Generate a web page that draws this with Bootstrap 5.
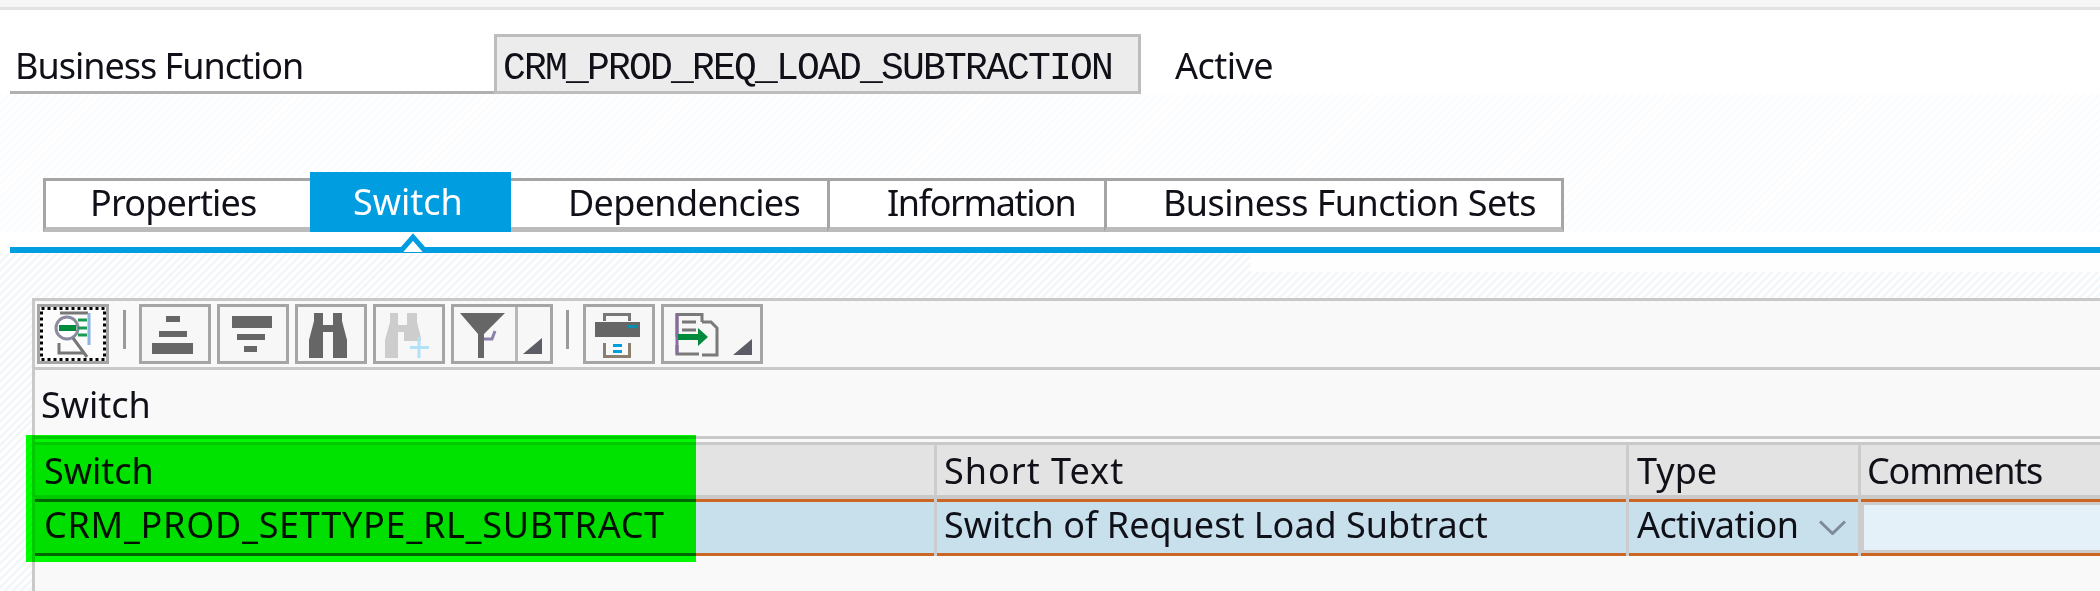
<!DOCTYPE html>
<html lang="en"><head><meta charset="utf-8"><title>Business Function</title>
<link href="https://cdn.jsdelivr.net/npm/bootstrap@5.3.0/dist/css/bootstrap.min.css" rel="stylesheet">
<style>
html,body{margin:0;height:591px;overflow:hidden}
body{width:2100px;background:#fff;color:#101018;font-family:"Noto Sans","Open Sans",sans-serif;font-size:36px;line-height:40px;position:relative}
.topstrip{height:10px;background:#f6f6f6;border-bottom:3px solid #e2e2e2}
.bfrow{padding:24px 0 0 10px;height:84px}
.bflabel{width:484px;height:60px;border-bottom:3px solid #b0b0b0;padding:12px 0 0 5px;letter-spacing:-1px}
.bffield{width:647px;height:60px;background:#ececec;border:3px solid #bdbdbd;font-family:"Liberation Mono",monospace;font-size:38px;letter-spacing:-1.8px;padding:12px 0 0 6px;white-space:nowrap}
.bfstate{padding:12px 0 0 34px;letter-spacing:-.5px}
.tabzone{padding:78px 0 0 43px;background:repeating-linear-gradient(135deg,#fbfcfd 0 2.8px,#fff 2.8px 5.6px)}
.tabsbar{height:60px;width:1521px}
.tabx{height:54px;border-top:3px solid #a5a5a5;border-bottom:5px solid #bbb;background:#fff;white-space:nowrap;padding-top:2px}
.tabp{width:267px;border-left:3px solid #a5a5a5;padding-left:44px;letter-spacing:-.85px}
.tabs{width:201px;height:60px;background:#009de0;color:#fff;border:0;padding:10px 0 0 43px}
.tabd{width:316px;padding-left:57px;letter-spacing:-.67px}
.tabi{width:277px;border-left:3px solid #a5a5a5;padding-left:57px;letter-spacing:-1.4px}
.tabb{width:460px;border-left:3px solid #a5a5a5;border-right:3px solid #a5a5a5;padding-left:56px;letter-spacing:-.55px}
.tabline{height:21px;background:linear-gradient(#fff 15px,#009de0 15px);padding:0;margin-left:10px}
.tablineleft{background:#fff}
.notch{left:398px;top:233px}
.hatch{height:338px;padding:45px 0 0 32px;background:linear-gradient(#fefefe,#fefefe) 1250px 0/850px 19px no-repeat,repeating-linear-gradient(135deg,#f3f7fa 0 2.8px,#fff 2.8px 5.6px)}
.panel{height:293px;background:#f9f9f9;border-left:3px solid #c9c9c9;border-top:3px solid #c9c9c9}
.toolrow{height:69px;padding:3px 0 0 2px;border-bottom:3px solid #c9c9c9;align-items:flex-start}
.tbtn{width:72px;height:60px;border:3px solid #a5a5a5;background:#f7f7f7;margin-right:6px;flex:none}
.tbtn svg{display:block;flex:none}
.tbwide{width:102px}
.tsep{width:3px;height:39px;background:#9b9b9b;margin:6px 13px 0 8px;flex:none}
.tsep2{margin:6px 14px 0 7px}
.paneltitle{height:69px;padding:15px 0 0 6px;border-bottom:3px solid #c9c9c9}
.gridgap{height:3px}
.ghead{height:57px;background:#e3e3e3;border-top:3px solid #c9c9c9;border-bottom:4px solid #c9c9c9}
.grow1{height:57px}
.gcell{border-right:3px solid #ccc;white-space:nowrap;flex:none}
.c1{width:902px;padding-left:9px}.c2{width:692px;padding-left:7px}.c3{width:232px;padding-left:8px}.c4{flex:1 1 auto;border-right:0;padding-left:6px}
.ghead .gcell{padding-top:6px;height:50px}
.grow1 .gcell{padding-top:6px;height:57px;position:relative;background:linear-gradient(#cc6625,#cc6625) top/100% 3px no-repeat,linear-gradient(#cc6625,#cc6625) bottom/100% 3px no-repeat,#c8dfec}
.grow1 .c4{padding:6px 0 6px 3px;background:linear-gradient(#cc6625,#cc6625) top/100% 3px no-repeat,linear-gradient(#cc6625,#cc6625) bottom/100% 3px no-repeat,#ccc}
.chev{right:12px;top:21px}
.cinput{height:45px;background:#e5f1f8}
.overlay{left:26px;top:435px;width:670px;height:127px;background:#00ff00;mix-blend-mode:multiply}
.lsp1{letter-spacing:1px}.lsm12{letter-spacing:-1.2px}.lsp7{letter-spacing:.7px}.lsm6{letter-spacing:-.6px}
</style></head>
<body>
<div class="topstrip"></div>
<div class="bfrow d-flex align-items-start">
  <div class="bflabel">Business Function</div>
  <div class="bffield">CRM_PROD_REQ_LOAD_SUBTRACTION</div>
  <div class="bfstate">Active</div>
</div>
<div class="tabzone">
<div class="tabsbar d-flex align-items-end">
  <div class="tabx tabp">Properties</div>
  <div class="tabx tabs">Switch</div>
  <div class="tabx tabd">Dependencies</div>
  <div class="tabx tabi">Information</div>
  <div class="tabx tabb">Business Function Sets</div>
</div>
</div>
<div class="tablineleft"><div class="tabline"></div></div>
<svg class="notch position-absolute" width="30" height="20" viewBox="0 0 30 20"><path d="M2 19 15 4 28 19Z" fill="#fff"/><path d="M2 19 15 4 28 19" fill="none" stroke="#009de0" stroke-width="5"/></svg>
<div class="hatch">
  <div class="panel">
    <div class="toolrow d-flex">
      <div class="tbtn"><svg width="66" height="54" viewBox="0 0 66 54"><rect x="1.5" y="1.5" width="63" height="51" fill="#fcfcfc" stroke="#000" stroke-width="3" stroke-dasharray="3 3"/><circle cx="27" cy="21" r="11" fill="#fff" stroke="#8a8aa0" stroke-width="3"/><path d="M20 6h28" stroke="#777" stroke-width="3"/><rect x="19" y="18" width="17" height="6" fill="#008a3c"/><path d="M38 13h9M38 21h9M38 28h9" stroke="#1a9a50" stroke-width="3"/><path d="M49 6v32" stroke="#8ab4e0" stroke-width="3"/><path d="M19 36v10h26M33 31l14 19" fill="none" stroke="#777" stroke-width="3"/></svg></div>
      <div class="tsep"></div>
      <div class="tbtn"><svg width="66" height="54" viewBox="0 0 66 54"><path d="M24 9h14v6H24zM17 24h28v6H17zM10 36h41v11H10z" fill="#666"/></svg></div>
      <div class="tbtn"><svg width="66" height="54" viewBox="0 0 66 54"><path d="M12 9h40v12H12zM17 27h28v6H17zM24 39h13v6H24z" fill="#666"/></svg></div>
      <div class="tbtn"><svg width="66" height="54" viewBox="0 0 66 54"><path d="M16 6h9v12h10V6h9v8l5 19v18H35V25H25v26H11V33l5-19z" fill="#666"/></svg></div>
      <div class="tbtn"><svg width="66" height="54" viewBox="0 0 66 54"><path d="M14 6h8v12h9V6h10v9l4 16v3H28V25h-6v26H9V33l5-18z" fill="#cdcdcd"/><path d="M43 30v21M34 40.500h19" stroke="#b3e2f8" stroke-width="3"/></svg></div>
      <div class="tbtn tbwide d-flex"><svg width="61" height="54" viewBox="0 0 61 54"><path d="M6 6h45L30 27v24h-6V27z" fill="#666"/><path d="M30 32h8l3-8" fill="none" stroke="#8a80a8" stroke-width="3"/></svg><svg width="35" height="54" viewBox="0 0 35 54"><path d="M1.500 0v54" stroke="#b8b8b8" stroke-width="3"/><path d="M8 47 27 31v16z" fill="#5c5c66"/></svg></div>
      <div class="tsep tsep2"></div>
      <div class="tbtn"><svg width="66" height="54" viewBox="0 0 66 54"><path d="M18.500 14V7.500h25V14" fill="none" stroke="#777" stroke-width="3"/><path d="M9 15h45v15H9z" fill="#666"/><rect x="42" y="18" width="9" height="3" fill="#0a8fb0"/><path d="M18.500 36v13.500h25V36" fill="#fafafa" stroke="#8d7f70" stroke-width="3"/><path d="M27 38.500h9M27 44.500h9" stroke="#00a0e0" stroke-width="3"/></svg></div>
      <div class="tbtn tbwide"><svg width="96" height="54" viewBox="0 0 96 54"><path d="M38 48h15V21l-6-6H38M13 30V7.500h25V15M13 38v9h22" fill="none" stroke="#7a7a7a" stroke-width="3"/><path d="M13 7v40" stroke="#8c6aa0" stroke-width="3"/><path d="M18 15h14M18 23h14" stroke="#777" stroke-width="3"/><path d="M14 27h20v-6l10 9-10 9v-6H14z" fill="#008a3c"/><path d="M69 48 88 32v16z" fill="#5c5c66"/></svg></div>
    </div>
    <div class="paneltitle">Switch</div>
    <div class="gridgap"></div>
    <div class="ghead d-flex">
      <div class="gcell c1">Switch</div><div class="gcell c2 lsp1">Short Text</div><div class="gcell c3">Type</div><div class="gcell c4 lsm12">Comments</div>
    </div>
    <div class="grow1 d-flex">
      <div class="gcell c1 lsp7">CRM_PROD_SETTYPE_RL_SUBTRACT</div><div class="gcell c2">Switch of Request Load Subtract</div><div class="gcell c3 lsm6">Activation<svg class="chev position-absolute" width="27" height="15" viewBox="0 0 27 15"><path d="M1 1.500l12.500 12L26 1.500" fill="none" stroke="#7f8a99" stroke-width="3"/></svg></div><div class="gcell c4"><div class="cinput"></div></div>
    </div>
  </div>
</div>
<div class="overlay position-absolute"></div>
<script src="https://cdn.jsdelivr.net/npm/bootstrap@5.3.0/dist/js/bootstrap.bundle.min.js"></script>
</body></html>
